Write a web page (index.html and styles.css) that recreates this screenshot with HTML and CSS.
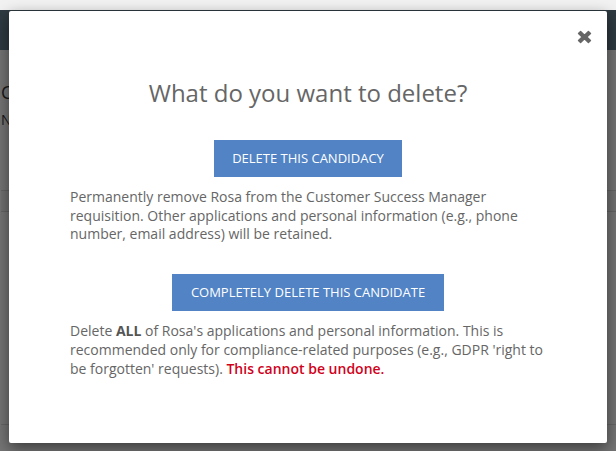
FILE: index.html
```html
<!DOCTYPE html>
<html lang="en">
<head>
    <meta charset="UTF-8">
    <title>Delete candidate</title>
    <link rel="stylesheet" href="styles.css">
</head>
<body>
<div class="page">
    <div class="top-strip"></div>
    <div class="navbar"></div>
    <div class="page-body">
        <h2 class="page-title">Customer Success Manager</h2>
        <div class="page-sub">New applicant</div>
        <div class="tabs"></div>
        <div class="list"></div>
    </div>
</div>
<div class="backdrop"></div>
<div class="modal">
    <button class="close" type="button">
        <svg width="15" height="14" viewBox="0 0 15 14">
            <path d="M1.5 3.6 L3.6 1.5 L7.5 5.2 L11.4 1.5 L13.5 3.6 L9.8 7 L13.5 10.4 L11.4 12.5 L7.5 8.8 L3.6 12.5 L1.5 10.4 L5.2 7 Z" fill="#666" stroke="#666" stroke-width="1.4" stroke-linejoin="round"/>
        </svg>
    </button>
    <div class="modal-body">
        <h4 class="modal-title">What do you want to delete?</h4>
        <div class="option">
            <button class="btn" type="button">DELETE THIS CANDIDACY</button>
            <p>Permanently remove Rosa from the Customer Success Manager requisition. Other applications and personal information (e.g., phone number, email address) will be retained.</p>
        </div>
        <div class="option second">
            <button class="btn" type="button">COMPLETELY DELETE THIS CANDIDATE</button>
            <p>Delete <b>ALL</b> of Rosa's applications and personal information. This is recommended only for compliance-related purposes (e.g., GDPR 'right to be forgotten' requests). <span class="warn">This cannot be undone.</span></p>
        </div>
    </div>
</div>
</body>
</html>
```

FILE: styles.css
```css
*{
    margin: 0;
    padding: 0;
    box-sizing: border-box;
}
body{
    font-family: "Open Sans", "Liberation Sans", sans-serif;
    background: #ebebeb;
    width: 616px;
    height: 451px;
    overflow: hidden;
}
/* page behind the dialog */
.top-strip{
    height: 10px;
    background: #f2f2f2;
}
.navbar{
    height: 40px;
    background: #5d7583;
}
.page-body{
    padding: 30px 0 0 1px;
    color: #333;
}
.page-title{
    font-size: 18px;
    font-weight: 400;
    line-height: 24px;
}
.page-sub{
    font-size: 14px;
    margin-top: 6px;
    line-height: 20px;
}
.tabs{
    margin-top: 60px;
    height: 22px;
    border-top: 1px solid #c9c9c9;
    border-bottom: 1px solid #c9c9c9;
    background: #e2e2e2;
}
.list{
    height: 213px;
    border-bottom: 1px solid #cfcfcf;
}
.backdrop{
    position: absolute;
    left: 0;
    top: 10px;
    right: 0;
    bottom: 0;
    background: rgba(0,0,0,.5);
}
/* dialog */
.modal{
    position: absolute;
    left: 9px;
    top: 11px;
    width: 598px;
    background: #fff;
    border-radius: 2px;
    box-shadow: 0 5px 15px rgba(0,0,0,.5);
}
.close{
    position: absolute;
    top: 19px;
    right: 15px;
    border: 0;
    background: none;
    width: 15px;
    height: 14px;
    cursor: pointer;
}
.close svg{
    display: block;
}
.modal-body{
    padding: 69px 61px 65px;
    text-align: center;
}
.modal-title{
    font-size: 24px;
    font-weight: 400;
    line-height: 26px;
    color: #666;
    margin-bottom: 34px;
}
.option p{
    text-align: left;
    font-size: 14px;
    line-height: 18.7px;
    color: #666;
    margin-top: 11px;
}
.option b{
    color: #555;
    font-weight: 700;
}
.option .warn{
    color: #d0021b;
    font-weight: 600;
}
.second{
    margin-top: 30px;
}
.btn{
    font-family: "Open Sans", "Liberation Sans", sans-serif;
    font-size: 13px;
    line-height: 17px;
    padding: 10px 18.5px;
    border: 0;
    background: #5183c5;
    color: #fff;
    cursor: pointer;
}
```
